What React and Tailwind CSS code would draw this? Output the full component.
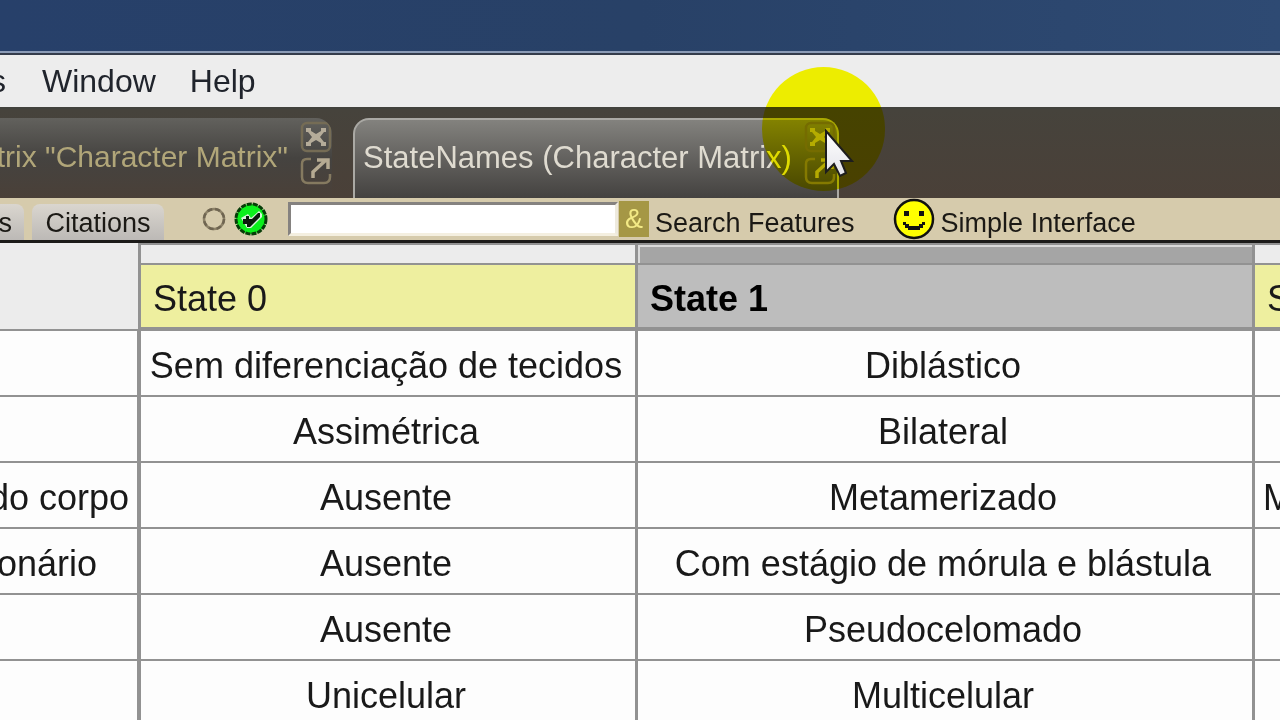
import React from "react";

const rows = [
  { name: "", nameClass: "", state0: "Sem diferenciação de tecidos", state1: "Diblástico", state2: "" },
  { name: "", nameClass: "", state0: "Assimétrica", state1: "Bilateral", state2: "" },
  { name: "do corpo", nameClass: "pr-2", state0: "Ausente", state1: "Metamerizado", state2: "M" },
  { name: "onário", nameClass: "pr-10", state0: "Ausente", state1: "Com estágio de mórula e blástula", state2: "" },
  { name: "", nameClass: "", state0: "Ausente", state1: "Pseudocelomado", state2: "" },
  { name: "", nameClass: "", state0: "Unicelular", state1: "Multicelular", state2: "" },
];

const TabIcons = () => (
  <div className="flex flex-col gap-1 shrink-0">
    <button type="button" aria-label="Close tab" className="block">
      <svg width="32" height="32" viewBox="0 0 32 32" fill="none">
        <rect x="2" y="2" width="28" height="28" rx="5" stroke="#756c55" strokeWidth="2.5" />
        <path d="M6 7h5v3l5 3 5-3V7h5v4h-2l-4 5 4 5h2v4h-5v-3l-5-3-5 3v3H6v-4h2l4-5-4-5H6z" fill="#b5ac99" />
      </svg>
    </button>
    <button type="button" aria-label="Detach tab" className="block">
      <svg width="32" height="28" viewBox="0 0 32 28" fill="none">
        <path d="M11 2H7Q2 2 2 7v13q0 6 6 6h16q6 0 6-6v-3" stroke="#857a60" strokeWidth="2.5" />
        <path d="M13 21v-6L26 3M17 3h11v9" stroke="#b5aa92" strokeWidth="3.5" />
      </svg>
    </button>
  </div>
);

const MenuBar = () => (
  <nav className="flex items-center h-[52px] bg-[#ededed] text-[32px] leading-[52px] text-[#20242c]">
    <div className="flex justify-end w-[6px] overflow-hidden">
      <button type="button">s</button>
    </div>
    <button type="button" className="ml-9">Window</button>
    <button type="button" className="ml-[34px]">Help</button>
  </nav>
);

const WindowTabs = () => (
  <div className="flex items-end h-[91px] bg-linear-to-b from-[#46433c] to-[#4a4038] border-t-2 border-[#42423d]">
    <div className="flex items-start justify-end w-[332px] h-20 pt-[3px] overflow-hidden rounded-tr-2xl text-[30px] bg-linear-to-b from-[#62615d] via-[#454340] to-[#4a4038]">
      <span className="mr-3 leading-[72px] whitespace-nowrap text-[#b1a679]">trix "Character Matrix"</span>
      <TabIcons />
    </div>
    <div className="flex items-start ml-[21px] h-20 pt-px pl-2 pr-px rounded-t-2xl border-2 border-b-0 border-[#aaa9a4] text-[31px] bg-linear-to-b from-[#83827e] to-[#444240]">
      <span className="mr-3 leading-[74px] whitespace-nowrap text-[#dfdbd0]">StateNames (Character Matrix)</span>
      <TabIcons />
    </div>
  </div>
);

const CheckIcon = () => (
  <svg width="34" height="34" viewBox="0 0 34 34" className="ml-2">
    <circle cx="17" cy="17" r="15" fill="#0cf01c" stroke="#063d08" strokeWidth="3" strokeDasharray="5 1" />
    <path d="M7 16l7-4 3 4 8-7 3 3v3L17 26h-4z" fill="#d8f5da" />
    <path d="M9 17h3v-3h3v3h3l6-6h2v4L16 25h-3v-3H9z" fill="#0c1a0c" />
  </svg>
);

const SmileyIcon = () => (
  <svg width="42" height="42" viewBox="0 0 42 42" className="ml-[38px] shrink-0">
    <circle cx="21" cy="21" r="19" fill="#ffff00" stroke="#111" strokeWidth="2.5" />
    <path d="M11 13h5v5h-5zM26 13h5v5h-5z" fill="#111" />
    <path d="M10 24h3v2h3v2h10v-2h3v-2h3v3h-2v3h-3v2H15v-2h-3v-3h-2z" fill="#111" />
  </svg>
);

const ToolBar = () => (
  <div className="flex items-center h-[45px] bg-[#d6cbac] border-b-3 border-[#1c1b19] text-[27px] leading-[36px] text-[#1b1915] whitespace-nowrap">
    <div className="flex self-end justify-end w-6 h-9 pt-px pr-3 overflow-hidden rounded-tr-lg bg-linear-to-b from-[#dad6cf] to-[#bcb9b6]">
      <button type="button">s</button>
    </div>
    <button type="button" className="self-end ml-2 h-9 w-[132px] pt-px rounded-t-lg bg-linear-to-b from-[#dad6cf] to-[#bcb9b6]">
      Citations
    </button>
    <svg width="24" height="24" viewBox="0 0 24 24" className="ml-[38px]">
      <circle cx="12" cy="12" r="10" fill="none" stroke="#8d8268" strokeWidth="2.5" />
      <circle cx="12" cy="12" r="10" fill="none" stroke="#6f6551" strokeWidth="2.5" strokeDasharray="5 3" />
    </svg>
    <CheckIcon />
    <input
      type="text"
      aria-label="Search"
      className="ml-5 w-[330px] h-[34px] px-2 bg-white border-3 border-t-[#858280] border-l-[#858280] border-r-[#eeeade] border-b-[#f4efe0] outline-none"
    />
    <span className="ml-px w-[30px] h-9 text-center text-[#f3ea86] bg-[#a59745]">&amp;</span>
    <button type="button" className="ml-1.5 pt-2">Search Features</button>
    <SmileyIcon />
    <button type="button" className="ml-1.5 pt-2">Simple Interface</button>
  </div>
);

const StateTable = () => (
  <table className="w-full table-fixed border-separate border-spacing-0 text-[36px] leading-[40px] text-[#191919] whitespace-nowrap">
    <colgroup>
      <col className="w-[141px]" />
      <col className="w-[497px]" />
      <col className="w-[617px]" />
      <col />
    </colgroup>
    <thead>
      <tr className="h-[22px]">
        <td rowSpan={2} className="p-0 bg-[#ececec] border-r-3 border-b-2 border-[#929292]"></td>
        <td className="p-0 bg-[#ececec] border-y-2 border-r-3 border-[#929292]"></td>
        <td className="p-0 bg-[#a5a5a5] border-y-2 border-r-3 border-[#929292]">
          <div className="h-[18px] border-t-2 border-l-2 border-[#dadada]"></div>
        </td>
        <td className="p-0 bg-[#ececec] border-y-2 border-[#929292]"></td>
      </tr>
      <tr className="h-[66px]">
        <th scope="col" className="p-0 pt-1.5 pl-3 text-left font-normal bg-[#eeef9f] border-b-4 border-r-3 border-[#929292]">
          State 0
        </th>
        <th scope="col" className="p-0 pt-1.5 pl-3 text-left font-bold text-black bg-[#bdbdbd] border-b-4 border-r-3 border-[#929292]">
          State 1
        </th>
        <th scope="col" className="p-0 pt-1.5 pl-3 text-left font-normal bg-[#eeef9f] border-b-4 border-[#929292] overflow-hidden">
          S
        </th>
      </tr>
    </thead>
    <tbody>
      {rows.map((row, i) => (
        <tr key={i} className="h-[66px] bg-[#fdfdfd]">
          <td className="p-0 pt-1.5 border-r-4 border-b-2 border-[#929292]">
            <div className={`flex justify-end overflow-hidden ${row.nameClass}`}>{row.name}</div>
          </td>
          <td className="p-0 pt-1.5 pr-1 text-center border-r-3 border-b-2 border-[#929292]">{row.state0}</td>
          <td className="p-0 pt-1.5 pr-1 text-center border-r-3 border-b-2 border-[#929292]">{row.state1}</td>
          <td className="p-0 pt-1.5 pl-2 overflow-hidden border-b-2 border-[#929292]">{row.state2}</td>
        </tr>
      ))}
    </tbody>
  </table>
);

// Highlight disc and arrow float over the tabs
const Pointer = () => (
  <>
    <div className="absolute left-[762px] top-[67px] w-[123px] h-[124px] rounded-full bg-[#ffff00] mix-blend-multiply pointer-events-none"></div>
    <svg width="32" height="50" viewBox="0 0 32 50" className="absolute left-[824px] top-[128px] pointer-events-none">
      <defs>
        <linearGradient id="arrow" x1="0" y1="0" x2="0" y2="1">
          <stop offset="0" stopColor="#ffffff" />
          <stop offset="1" stopColor="#e4e4ea" />
        </linearGradient>
      </defs>
      <path d="M2 3v41l8-8 6 12 6-3-5-12h11z" fill="url(#arrow)" stroke="#1d1d1d" strokeWidth="2" />
    </svg>
  </>
);

export default function App() {
  return (
    <div className="relative h-screen overflow-hidden bg-[#fdfdfd] font-['Liberation_Sans',Arial,sans-serif]">
      <div className="h-[55px] bg-linear-to-r from-[#27406a] via-[#284167] to-[#2e4a73] border-b-2 border-[#343c4b]">
        <div className="h-full border-b-2 border-[#8b9bb6]"></div>
      </div>
      <MenuBar />
      <WindowTabs />
      <ToolBar />
      <StateTable />
      <Pointer />
    </div>
  );
}
